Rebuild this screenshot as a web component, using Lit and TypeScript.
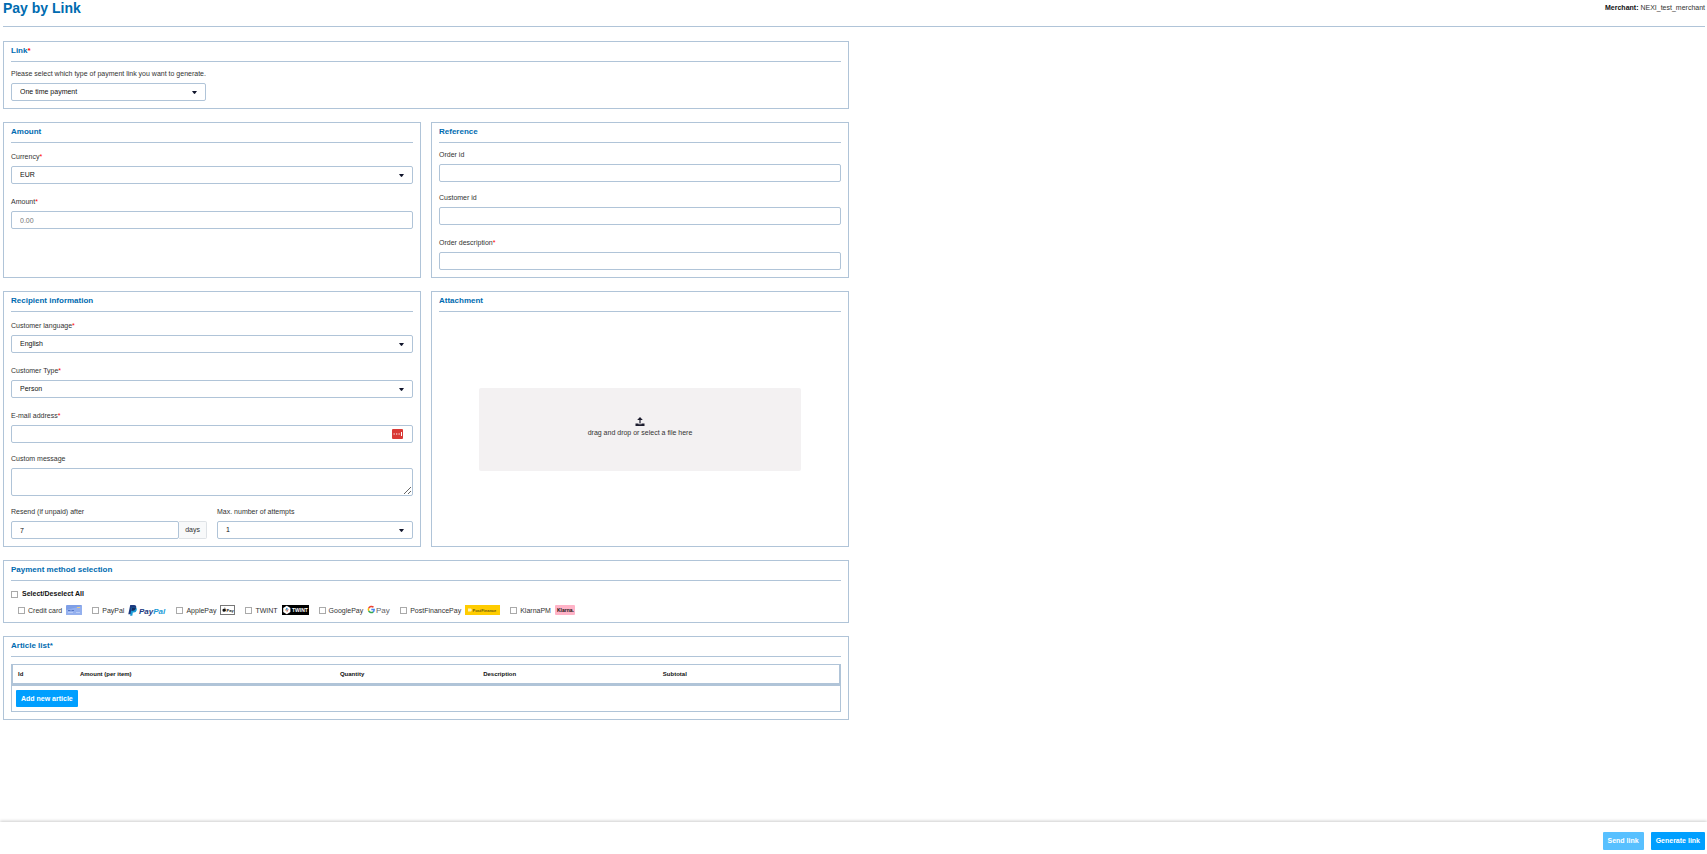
import { LitElement, html, css, nothing, TemplateResult } from "lit";
import { customElement, property } from "lit/decorators.js";

const caret = html`<svg class="caret" viewBox="0 0 5 3" aria-hidden="true"><path d="M0 0h5L3.2 2.6q-.7.7-1.4 0z" fill="#10142b" /></svg>`;

const cardLogo = html`<svg width="16" height="10" viewBox="0 0 16 10" aria-hidden="true">
  <rect width="16" height="10" rx="1" fill="#7f9fe6" />
  <path d="M0 5 16 1v8q0 1-1 1H1q-1 0-1-1z" fill="#94b0ee" />
  <rect x="11" y="2" width="3" height="1" fill="#e8c98a" />
  <path d="M2 5.500h2.500M5.500 5.500H8" stroke="#5474c4" stroke-width="1" />
  <path d="M2 7.500h5M10 7.500h4" stroke="#b9cbf5" stroke-width="1" />
</svg>`;

const paypalLogo = html`<svg width="38" height="11" viewBox="0 0 38 11" aria-hidden="true">
  <path d="M2.200 0h3.900q2.600.2 2.100 2.900Q7.600 5.700 4.900 5.700H3.700L3 9.300H.3z" fill="#1c3a80" />
  <path d="M3.700 2.600h3.800q1.700.4 1.300 2.500-.6 2.500-3 2.500h-1L4.300 10.800H2.100z" fill="#1a9bd7" />
  <path d="M3.900 2.600h4.200Q7.600 5.700 4.900 5.700H3.300z" fill="#152c62" />
  <text x="11" y="8.500" font-size="8" font-weight="700" font-style="italic" fill="#1c3a80">Pay<tspan fill="#1a9bd7">Pal</tspan></text>
</svg>`;

const appleLogo = html`<svg width="15" height="10" viewBox="0 0 15 10" aria-hidden="true">
  <rect x=".5" y=".5" width="14" height="9" fill="#fff" stroke="#777" />
  <path d="M4.300 3.400q.1-.9.9-1.100 0 .9-.9 1.100M4.200 3.800q1.300-.6 1.700.1-.8.8.1 1.700-.5 1.500-1.800 1-1.200.4-1.700-.9-.4-2.300 1.700-1.900" fill="#111" />
  <text x="6.500" y="6.700" font-size="4" font-weight="700" fill="#111">Pay</text>
</svg>`;

const twintLogo = html`<svg width="27" height="10" viewBox="0 0 27 10" aria-hidden="true">
  <rect width="27" height="10" fill="#000" />
  <path d="M4.800.8 8.400 2.900v4.200L4.800 9.200 1.200 7.100V2.900z" fill="#fff" />
  <path d="m4.800 7.500-2-3.200 1.300.3z" fill="#f28c28" />
  <path d="m4.800 7.500 2-3.200-1.300.3z" fill="#d8403a" />
  <path d="m4.800 6.200-1-2.600 1-.9 1 .9z" fill="#3b93c9" />
  <text x="10" y="7" font-size="5" font-weight="700" fill="#fff">TWINT</text>
</svg>`;

const googleLogo = html`<svg width="23" height="10" viewBox="0 0 23 10" aria-hidden="true">
  <path d="M6.500 2.300A2.900 2.900 0 0 0 1.700 3.200" fill="none" stroke="#ea4335" stroke-width="1.500" />
  <path d="M1.700 3.200a2.900 2.900 0 0 0 0 2.700" fill="none" stroke="#fbbc04" stroke-width="1.500" />
  <path d="M1.700 5.900a2.900 2.900 0 0 0 4.500 1" fill="none" stroke="#34a853" stroke-width="1.500" />
  <path d="M4.300 4.500h2.900q0 1.500-1 2.400" fill="none" stroke="#4285f4" stroke-width="1.400" />
  <text x="9" y="7.500" font-size="8" fill="#5f6368">Pay</text>
</svg>`;

const postLogo = html`<svg width="35" height="10" viewBox="0 0 35 10" aria-hidden="true">
  <rect width="35" height="10" fill="#fc0" />
  <path d="M3 3.500h3L7 5 6 6.500H3z" fill="#fff2b8" />
  <text x="7.500" y="6.500" font-size="4" font-weight="700" fill="#6b5a10">PostFinance</text>
</svg>`;

const klarnaLogo = html`<svg width="20" height="10" viewBox="0 0 20 10" aria-hidden="true">
  <rect width="20" height="10" rx="1" fill="#ffb3c7" />
  <text x="2" y="7" font-size="5" font-weight="700" fill="#17120f">Klarna.</text>
</svg>`;

const shared = css`
  * { box-sizing: border-box; }
  .panel { display: flex; flex-direction: column; border: 1px solid var(--line); padding: 0 7px 7px; min-width: 0; }
  .panel-title { margin: 0; padding-bottom: 2px; border-bottom: 1px solid var(--line); color: var(--brand); font-size: 8px; line-height: 17px; font-weight: 700; }
  .star { color: #f00; }
`;

/* Label plus a text box, drop-down or message box. */
@customElement("form-field")
class FormField extends LitElement {
  @property() label = "";
  @property() kind = "text";
  @property() value = "";
  @property() hint = "";
  @property() suffix = "";
  @property({ type: Boolean }) required = false;
  @property({ type: Boolean }) autofill = false;
  @property({ attribute: false }) options: string[] = [];

  static styles = [shared, css`
    :host { display: block; min-width: 0; }
    .label { display: block; padding-top: 6px; margin-bottom: 4px; font-size: 7px; line-height: 11px; color: #333; white-space: nowrap; }
    .required { padding-top: 8px; }
    .box { display: grid; grid-template-columns: minmax(0, 1fr) auto; align-items: center; }
    .control { grid-area: 1 / 1; width: 100%; height: 18px; margin: 0; padding: 0 8px; border: 1px solid var(--line); border-radius: 2px; background: #fff; color: #111; font: 7px/16px "Liberation Sans", Arial, sans-serif; appearance: none; display: block; }
    .control::placeholder { color: #757575; opacity: 1; }
    .message { height: 28px; resize: both; }
    .caret { grid-area: 1 / 1; justify-self: end; width: 5px; height: 3px; margin-right: 9px; pointer-events: none; }
    .vault { grid-area: 1 / 1; justify-self: end; width: 11px; height: 10px; margin-right: 10px; }
    .suffix { padding: 0 6px; height: 18px; border: 1px solid #dee2e6; border-left: 0; border-radius: 0 2px 2px 0; background: #f8f9fa; font-size: 7px; line-height: 16px; color: #333; }
  `];

  private control(): TemplateResult {
    if (this.kind === "select") {
      return html`<select id="control" class="control">${this.options.map((o) => html`<option>${o}</option>`)}</select>${caret}`;
    }
    if (this.kind === "message") return html`<textarea id="control" class="control message"></textarea>`;
    return html`<input id="control" class="control" type="text" .value=${this.value} placeholder=${this.hint} />`;
  }

  render() {
    return html`
      <label class="label ${this.required ? "required" : ""}" for="control">${this.label}${this.required ? html`<span class="star">*</span>` : nothing}</label>
      <div class="box">
        ${this.control()}
        ${this.autofill ? html`<svg class="vault" viewBox="0 0 11 10" aria-hidden="true"><rect width="11" height="10" rx="1" fill="#d93a36" /><path d="M1.500 5h1.300M4 5h1.300M6.500 5h1.300M9.500 3v4" stroke="#fff" stroke-width="1" /></svg>` : nothing}
        ${this.suffix ? html`<span class="suffix">${this.suffix}</span>` : nothing}
      </div>`;
  }
}

@customElement("app-root")
class AppRoot extends LitElement {
  static styles = [shared, css`
    :host { --line: #b0c4d8; --brand: #006bb0; display: flex; flex-direction: column; min-height: 100vh; background: #fff; color: #333; font: 7px/11px "Liberation Sans", Arial, sans-serif; }
    .page { flex: 1; padding: 0 2px 0 3px; }
    .top { display: flex; justify-content: space-between; border-bottom: 1px solid var(--line); padding-bottom: 10px; margin-bottom: 14px; }
    .heading { margin: 0; font-size: 14px; line-height: 16px; color: var(--brand); }
    .merchant { line-height: 16px; }
    .strong { color: #111; }
    .form { display: flex; flex-direction: column; gap: 13px; width: calc(50% - 5px); }
    .pair { display: grid; grid-template-columns: minmax(0, 1fr) minmax(0, 1fr); gap: 10px; }
    .fields { display: flex; flex-direction: column; gap: 4px; }
    .link-type { align-self: flex-start; }
    .split { display: grid; grid-template-columns: 196px minmax(0, 1fr); gap: 10px; }
    .drop-area { flex: 1; display: flex; align-items: center; justify-content: center; padding-top: 7px; }
    .drop { width: 80%; height: 83px; border-radius: 2px; background: #f3f1f2; display: flex; flex-direction: column; align-items: center; justify-content: center; gap: 1px; padding-bottom: 4px; cursor: pointer; }
    .file { position: absolute; width: 1px; height: 1px; opacity: 0; }
    .check { display: inline-flex; align-items: center; gap: 3px; white-space: nowrap; }
    .tick { appearance: none; width: 7px; height: 7px; margin: 0; border: 1px solid #aaa; background: #fff; }
    .tick:checked { background: #009fff; }
    .all { align-self: flex-start; margin-top: 7px; gap: 4px; font-weight: 700; line-height: 12px; color: #111; }
    .methods { display: flex; flex-wrap: wrap; gap: 10px; padding-left: 7px; margin-top: 5px; }
    .method { height: 10px; }
    .method svg { flex: none; overflow: visible; margin-left: 1px; font-family: "Liberation Sans", Arial, sans-serif; }
    .articles { width: 100%; margin-top: 7px; border: 1px solid var(--line); border-spacing: 0; table-layout: fixed; }
    .articles th { height: 21px; padding: 0 5px; border-bottom: 3px solid var(--line); text-align: left; font-size: 6px; line-height: 12px; color: #111; }
    .articles th:first-child { border-left: 1px solid var(--line); }
    .articles th:last-child { border-right: 1px solid var(--line); }
    .articles td { padding: 4px; }
    .button { display: block; height: 18px; padding: 0 5px; border: 0; border-radius: 1px; background: #009fff; color: #fff; font: 700 7px/16px "Liberation Sans", Arial, sans-serif; cursor: pointer; white-space: nowrap; }
    .add { height: 17px; }
    .button:disabled { opacity: 0.65; cursor: default; }
    .actions { display: flex; justify-content: flex-end; gap: 7px; padding: 10px 2px 4px; background: #fff; box-shadow: 0 -1px 3px rgba(0, 0, 0, 0.2); }
    .c-id { width: 7.6%; } .c-amount { width: 31.4%; } .c-quantity { width: 17.3%; } .c-description { width: 21.7%; }
  `];

  private methods: [string, TemplateResult][] = [
    ["Credit card", cardLogo],
    ["PayPal", paypalLogo],
    ["ApplePay", appleLogo],
    ["TWINT", twintLogo],
    ["GooglePay", googleLogo],
    ["PostFinancePay", postLogo],
    ["KlarnaPM", klarnaLogo],
  ];

  render() {
    return html`
      <main class="page">
        <header class="top">
          <h1 class="heading">Pay by Link</h1>
          <div class="merchant"><b class="strong">Merchant:</b> NEXI_test_merchant</div>
        </header>
        <div class="form">
          <section class="panel">
            <h2 class="panel-title">Link<span class="star">*</span></h2>
            <form-field class="link-type" kind="select" label="Please select which type of payment link you want to generate." .options=${["One time payment"]}></form-field>
          </section>
          <div class="pair">
            <section class="panel">
              <h2 class="panel-title">Amount</h2>
              <div class="fields">
                <form-field kind="select" label="Currency" required .options=${["EUR"]}></form-field>
                <form-field label="Amount" required hint="0.00"></form-field>
              </div>
            </section>
            <section class="panel">
              <h2 class="panel-title">Reference</h2>
              <div class="fields">
                <form-field label="Order id"></form-field>
                <form-field label="Customer id"></form-field>
                <form-field label="Order description" required></form-field>
              </div>
            </section>
          </div>
          <div class="pair">
            <section class="panel">
              <h2 class="panel-title">Recipient information</h2>
              <div class="fields">
                <form-field kind="select" label="Customer language" required .options=${["English"]}></form-field>
                <form-field kind="select" label="Customer Type" required .options=${["Person"]}></form-field>
                <form-field label="E-mail address" required autofill></form-field>
                <form-field kind="message" label="Custom message"></form-field>
                <div class="split">
                  <form-field label="Resend (if unpaid) after" value="7" suffix="days"></form-field>
                  <form-field kind="select" label="Max. number of attempts" .options=${["1"]}></form-field>
                </div>
              </div>
            </section>
            <section class="panel">
              <h2 class="panel-title">Attachment</h2>
              <div class="drop-area">
                <label class="drop">
                  <input class="file" type="file" />
                  <svg width="10" height="9" viewBox="0 0 10 9" aria-hidden="true"><path d="M5 0 7.800 3H5.600v3.500H4.400V3H2.200z" fill="#1c1c2e" /><path d="M.5 6.500h3V7.300h3v-.8h3V9h-9z" fill="#1c1c2e" /></svg>
                  <span>drag and drop or select a file here</span>
                </label>
              </div>
            </section>
          </div>
          <section class="panel">
            <h2 class="panel-title">Payment method selection</h2>
            <label class="check all"><input class="tick" type="checkbox" />Select/Deselect All</label>
            <div class="methods">
              ${this.methods.map(([name, logo]) => html`<label class="check method"><input class="tick" type="checkbox" />${name}${logo}</label>`)}
            </div>
          </section>
          <section class="panel">
            <h2 class="panel-title">Article list*</h2>
            <table class="articles">
              <thead>
                <tr>
                  <th class="c-id">Id</th>
                  <th class="c-amount">Amount (per item)</th>
                  <th class="c-quantity">Quantity</th>
                  <th class="c-description">Description</th>
                  <th>Subtotal</th>
                </tr>
              </thead>
              <tbody>
                <tr><td colspan="5"><button class="button add" type="button">Add new article</button></td></tr>
              </tbody>
            </table>
          </section>
        </div>
      </main>
      <footer class="actions">
        <button class="button" type="button" disabled>Send link</button>
        <button class="button" type="button">Generate link</button>
      </footer>`;
  }
}
